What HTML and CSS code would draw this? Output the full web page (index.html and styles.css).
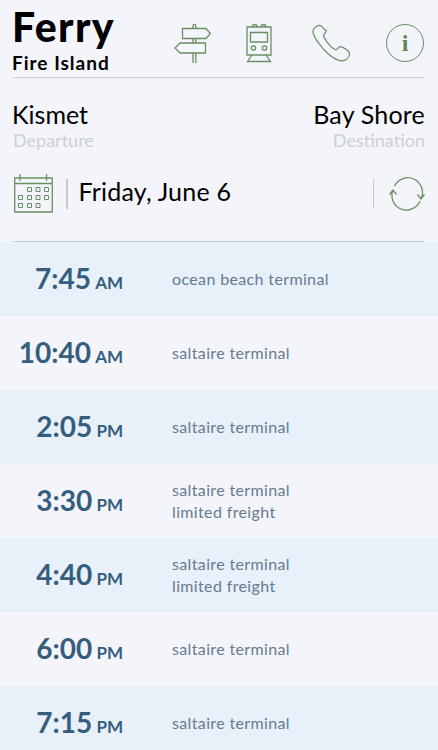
FILE: index.html
```html
<!DOCTYPE html>
<html lang="en">
<head>
<meta charset="utf-8">
<title>Ferry</title>
<link rel="stylesheet" href="styles.css">
</head>
<body>
<div class="app">
  <header class="top">
    <div class="brand">
      <div class="title">Ferry</div>
      <div class="subtitle">Fire Island</div>
    </div>
    <nav class="nav">
      <svg class="ic" width="38" height="40" viewBox="0 0 38 40"><path d="M19 5.500V2.800a1.400 1.400 0 0 1 2.800 0V5.500M8.500 5.500H32l4.300 5-4.300 5H8.500zM19 15.500V20M21.800 15.500V20M6 20H31.500V30H6L1 25zM19 30V40M21.800 30V40"/></svg>
      <svg class="ic train" width="26" height="40" viewBox="0 0 26 40"><path d="M1 4H25V32H1zM6 4a2.500 2.500 0 0 1 5 0M15 4a2.500 2.500 0 0 1 5 0M4.500 9.500H21.500V19H4.500z"/><circle cx="7.500" cy="25" r="2.200"/><circle cx="18.500" cy="25" r="2.200"/><path d="M6 32 1.500 38.500H24.500L20 32"/></svg>
      <svg class="ic phone" width="38" height="38" viewBox="0 0 40 40"><path d="M7.500 1.500C5 1.500 1 5 1 7.500c0 3 2.500 8 7 14 5 6.500 12 13 17 15.500 3.500 1.700 7 2.500 10 1 2.500-1.300 4.500-4.500 4.500-6.500 0-1.500-1-3-2.500-4-1.800-1.200-4-3-6-3.500-2.200-.5-3 .8-4 2-.7.800-1.500 1.200-2.500.8-2-.8-5-3.500-7.500-6.500-2.500-3-4.500-6-4.800-8-.2-1.200.5-1.800 1.300-2.500 1-1 1.800-2 1.200-3.500C13 6.500 12 4.500 11 3.200 10 2 8.800 1.500 7.500 1.500z"/></svg>
      <span class="info"><span class="info-i">i</span></span>
    </nav>
  </header>

  <section class="route">
    <div class="place">
      <div class="place-name">Kismet</div>
      <div class="place-label">Departure</div>
    </div>
    <div class="place place-end">
      <div class="place-name">Bay Shore</div>
      <div class="place-label">Destination</div>
    </div>
  </section>

  <section class="date-row">
    <svg class="ic cal" width="39" height="39" viewBox="0 0 39 39"><path d="M.700 4H38.300V38H.700zM.700 9.500H38.300M6 0V7M32.500 0V7"/><path class="thin" d="M13.500 13.500h4v4h-4zM22 13.500h4v4h-4zM30.500 13.500h4v4h-4zM4.500 21.500h4v4h-4zM13.500 21.500h4v4h-4zM22 21.500h4v4h-4zM30.500 21.500h4v4h-4zM4.500 29.500h4v4h-4zM13.500 29.500h4v4h-4zM22 29.500h4v4h-4z"/></svg>
    <span class="divider"></span>
    <div class="date">Friday, June 6</div>
    <span class="divider divider-end"></span>
    <svg class="ic swap" width="38" height="34" viewBox="0 0 38 34"><path d="M5 13A14.500 14.500 0 0 0 32 24M6.500 9A14.500 14.500 0 0 1 33 22M1.500 17.500 5 13l3.500 4.500M29.500 17.500 33 22l3.500-4.500"/></svg>
  </section>

  <main class="list">
    <div class="row alt"><div class="time"><b>7:45</b> <small>AM</small></div><div class="where">ocean beach terminal</div></div>
    <div class="row"><div class="time"><b>10:40</b> <small>AM</small></div><div class="where">saltaire terminal</div></div>
    <div class="row alt"><div class="time"><b>2:05</b> <small>PM</small></div><div class="where">saltaire terminal</div></div>
    <div class="row"><div class="time"><b>3:30</b> <small>PM</small></div><div class="where">saltaire terminal<br>limited freight</div></div>
    <div class="row alt"><div class="time"><b>4:40</b> <small>PM</small></div><div class="where">saltaire terminal<br>limited freight</div></div>
    <div class="row"><div class="time"><b>6:00</b> <small>PM</small></div><div class="where">saltaire terminal</div></div>
    <div class="row alt"><div class="time"><b>7:15</b> <small>PM</small></div><div class="where">saltaire terminal</div></div>
  </main>
</div>
</body>
</html>
```
FILE: styles.css
```css
* { box-sizing: border-box; }
html, body { margin: 0; height: 100%; overflow: hidden; }
body { background: #f3f5fa; font-family: "Lato", "Noto Sans", sans-serif; color: #000; }
.app { width: 438px; height: 750px; overflow: hidden; }
.top { margin: 0 14px 0 13px; height: 78px; border-bottom: 1.5px solid #c9cccf; display: flex; justify-content: space-between; }
.brand { padding-top: 4px; margin-left: -1px; }
.title { font-size: 41px; font-weight: 900; line-height: 46px; letter-spacing: 1.4px; }
.subtitle { font-size: 19px; font-weight: 700; line-height: 26px; letter-spacing: 1px; }
.nav { display: flex; align-items: center; gap: 34px; height: 40px; margin-top: 23px; width: 250px; }
.phone { margin-left: 6px; }
.ic { fill: none; stroke: #6a8f62; stroke-width: 1.300; flex: none; }
.info { width: 38px; height: 38px; margin-left: 2px; flex: none; border: 1.500px solid #6a8f62; border-radius: 50%; display: flex; align-items: center; justify-content: center; }
.info-i { font-family: "Liberation Serif", serif; font-weight: 700; font-size: 24px; color: #5f8657; line-height: 1; }
.route { margin: 0 13px; padding-top: 23px; display: flex; justify-content: space-between; }
.place-end { text-align: right; }
.place-name { font-size: 25px; line-height: 27px; margin-left: -1px; }
.place-end .place-name { letter-spacing: .2px; margin-left: 0; }
.place-label { font-size: 18px; line-height: 24px; color: #ccd0d6; font-weight: 400; }
.date-row { margin: 22px 13px 0; height: 39px; display: flex; align-items: center; }
.cal { margin-left: 1px; }
.thin { stroke-width: 1; }
.divider { width: 1.500px; height: 30px; background: #c6c9cc; margin-left: 13px; }
.date { font-size: 25px; line-height: 35px; padding-bottom: 4px; margin-left: 11px; flex: 1; letter-spacing: .2px; }
.divider-end { margin: 0 14px 0 0; }
.swap { margin-right: -1px; }
.list::before { content: ""; display: block; margin: 0 14px 0 13px; height: 28px; border-bottom: 1.500px solid #c9cccf; }
.row { height: 74px; display: flex; align-items: center; background: #f3f5fa; }
.row.alt { background: #e8f0fa; }
.time { width: 123px; padding-bottom: 2px; text-align: right; color: #355d7e; flex: none; white-space: nowrap; }
.time b { font-size: 28px; font-weight: 700; }
.time small { font-size: 17px; font-weight: 700; }
.where { margin-left: 49px; font-size: 16px; line-height: 22px; color: #667b90; letter-spacing: .36px; }
```
